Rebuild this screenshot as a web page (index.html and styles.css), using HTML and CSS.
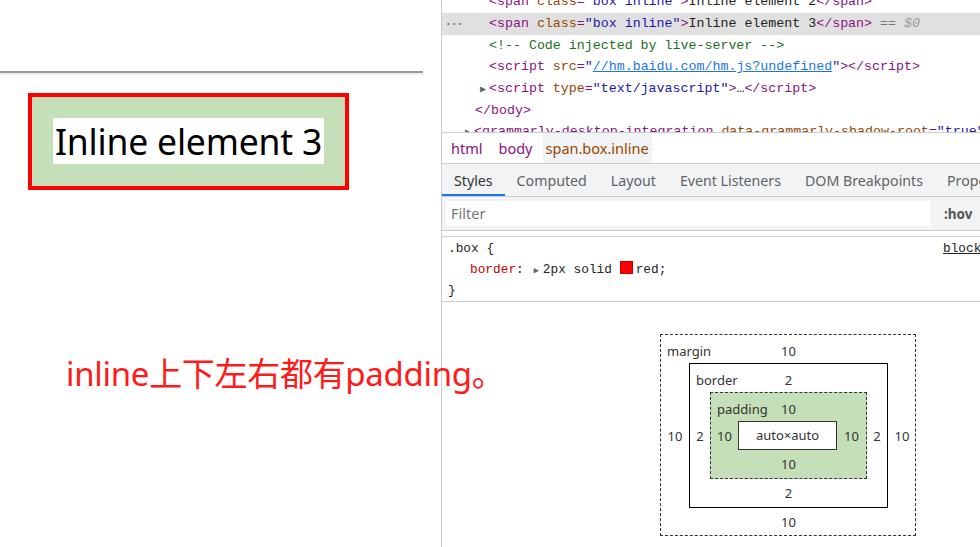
FILE: index.html
```html
<!DOCTYPE html>
<html>
<head>
<meta charset="utf-8">
<link rel="stylesheet" href="styles.css">
</head>
<body>
<div class="page">
  <hr class="rule">
  <div class="demo"><span class="inline-box">Inline element 3</span></div>
</div>
<div class="note">inline上下左右都有padding。</div>
<div class="devtools">
  <div class="tree">
    <div class="row d2"><span class="tg">&lt;span</span> <span class="an">class</span><span class="tg">=</span><span class="av">"box inline"</span><span class="tg">&gt;</span>Inline element 2<span class="tg">&lt;/span&gt;</span></div>
    <div class="row d2 sel"><span class="dots">•••</span><span class="tg">&lt;span</span> <span class="an">class</span><span class="tg">=</span><span class="av">"box inline"</span><span class="tg">&gt;</span>Inline element 3<span class="tg">&lt;/span&gt;</span><span class="eq"> == <i>$0</i></span></div>
    <div class="row d2"><span class="cm">&lt;!-- Code injected by live-server --&gt;</span></div>
    <div class="row d2"><span class="tg">&lt;script</span> <span class="an">src</span><span class="tg">=</span><span class="av">"<u class="lk">//hm.baidu.com/hm.js?undefined</u>"</span><span class="tg">&gt;&lt;/script&gt;</span></div>
    <div class="row d2"><span class="tri">▶</span><span class="tg">&lt;script</span> <span class="an">type</span><span class="tg">=</span><span class="av">"text/javascript"</span><span class="tg">&gt;</span>…<span class="tg">&lt;/script&gt;</span></div>
    <div class="row d1"><span class="tg">&lt;/body&gt;</span></div>
    <div class="row d0"><span class="tri">▶</span><span class="tg">&lt;grammarly-desktop-integration</span> <span class="an">data-grammarly-shadow-root</span><span class="tg">=</span><span class="av">"true"</span><span class="tg">&gt;</span></div>
  </div>
  <div class="crumbs">
    <span class="crumb">html</span>
    <span class="crumb">body</span>
    <span class="crumb cur">span.box.inline</span>
  </div>
  <div class="tabs">
    <span class="tab on">Styles</span>
    <span class="tab">Computed</span>
    <span class="tab">Layout</span>
    <span class="tab">Event Listeners</span>
    <span class="tab">DOM Breakpoints</span>
    <span class="tab">Properties</span>
  </div>
  <div class="filterbar">
    <div class="filter">Filter</div>
    <span class="hov">:hov</span>
  </div>
  <div class="rules">
    <div class="rulehead"><span>.box {</span><u class="src">blocks.html:9</u></div>
    <div class="decl"><span class="pn">border</span>: <span class="ptri">▶</span>2px solid <span class="sw"></span>red;</div>
    <div>}</div>
  </div>
  <div class="metrics">
    <div class="bm margin">
      <div class="top"><span class="lbl">margin</span><span>10</span><span></span></div>
      <div class="side">10</div>
      <div class="bm border">
        <div class="top"><span class="lbl">border</span><span>2</span><span></span></div>
        <div class="side">2</div>
        <div class="bm padding">
          <div class="top"><span class="lbl">padding</span><span>10</span><span></span></div>
          <div class="side">10</div>
          <div class="content">auto×auto</div>
          <div class="side">10</div>
          <div class="bottom">10</div>
        </div>
        <div class="side">2</div>
        <div class="bottom">2</div>
      </div>
      <div class="side">10</div>
      <div class="bottom">10</div>
    </div>
  </div>
</div>
</body>
</html>
```

FILE: styles.css
```css
html, body {
  margin: 0;
  height: 547px;
  overflow: hidden;
}
body {
  display: flex;
  background: #fff;
  font-family: "Noto Sans", "Open Sans", sans-serif;
  position: relative;
}
.page {
  width: 441px;
  flex-shrink: 0;
  padding-top: 71px;
  box-sizing: border-box;
}
.rule {
  margin: 0;
  width: 423px;
  height: 0;
  border: none;
  border-top: 2px solid #9a9a9a;
  border-bottom: 2px solid #ededed;
}
.demo {
  display: inline-block;
  margin: 18px 0 0 28px;
  border: 4px solid #ff0000;
  background: #c5dfb9;
  padding: 21px 21px 22px 21px;
}
.inline-box {
  display: block;
  background: #fff;
  color: #000;
  font-family: "Noto Sans", sans-serif;
  font-size: 35.5px;
  line-height: 46px;
  height: 46px;
  width: 271px;
  text-align: center;
  letter-spacing: -0.2px;
  white-space: nowrap;
}
.note {
  position: absolute;
  left: 66px;
  top: 351px;
  color: #ff1a1a;
  font-family: "Noto Sans", "Noto Sans CJK SC", sans-serif;
  font-size: 33px;
  line-height: 46px;
  z-index: 2;
  white-space: nowrap;
  letter-spacing: -0.3px;
}
.devtools {
  width: 692px;
  flex-shrink: 0;
  border-left: 1px solid #cbcdd1;
  color: #222;
  font-family: "Noto Sans", sans-serif;
}
.tree {
  height: 132px;
  overflow: hidden;
  font-family: "Liberation Mono", monospace;
  font-size: 13.3px;
  white-space: nowrap;
}
.row {
  height: 21.7px;
  line-height: 21.7px;
  color: #222;
}
.row:first-child { margin-top: -8.7px; }
.d2 { padding-left: 47px; }
.d1 { padding-left: 33px; }
.d0 { padding-left: 32px; }
.sel { background: #e0e0e0; position: relative; }
.dots {
  position: absolute;
  left: 4px;
  font-size: 8px;
  color: #777;
  letter-spacing: 1px;
}
.tri {
  display: inline-block;
  width: 8px;
  margin-left: -9px;
  margin-right: 1px;
  font-size: 10px;
  color: #666;
}
.tg { color: #881280; }
.an { color: #994500; }
.av { color: #1a1aa6; }
.cm { color: #236e25; }
.lk { color: #1a73e8; }
.eq { color: #777; }
.eq i { color: #999; }
.crumbs {
  height: 30px;
  border-top: 1px solid #cbcdd1;
  display: flex;
  align-items: stretch;
  padding-left: 6px;
  font-size: 14.5px;
}
.crumb {
  display: flex;
  align-items: center;
  padding: 0 3px;
  margin-right: 10px;
  color: #881280;
}
.crumb.cur {
  background: #f1f3f4;
  color: #994500;
  margin-left: -3px;
}
.tabs {
  height: 32px;
  background: #f1f3f4;
  border-top: 1px solid #cbcdd1;
  border-bottom: 1px solid #cbcdd1;
  display: flex;
  font-size: 14.2px;
  white-space: nowrap;
}
.tab {
  display: flex;
  align-items: center;
  padding: 0 12px;
  color: #5f6368;
  box-sizing: border-box;
  border-bottom: 2px solid transparent;
  padding-top: 2px;
}
.tab.on {
  color: #333;
  border-bottom-color: #1a73e8;
}
.filterbar {
  height: 33px;
  background: #f1f3f4;
  border-bottom: 1px solid #cbcdd1;
  display: flex;
  align-items: center;
  padding-left: 4px;
}
.filter {
  width: 484px;
  height: 25px;
  background: #fff;
  color: #777;
  font-size: 14.5px;
  line-height: 25px;
  padding-left: 5px;
  box-sizing: border-box;
}
.hov {
  margin-left: 14px;
  font-weight: bold;
  font-size: 13.5px;
  color: #555;
}
.rules {
  margin-top: 5px;
  border-top: 1px solid #cbcdd1;
  border-bottom: 1px solid #cbcdd1;
  padding: 2px 0 4px 6px;
  height: 58px;
  font-family: "Liberation Mono", monospace;
  font-size: 12.8px;
  line-height: 19.5px;
  color: #222;
}
.rulehead {
  display: grid;
  grid-template-columns: 495px auto;
}
.src { color: #222; }
.decl { padding-left: 22px; line-height: 21px; }
.decl + div { line-height: 17px; }
.pn { color: #c80000; }
.ptri {
  font-size: 9px;
  color: #666;
  margin-right: 4px;
  margin-left: 2px;
}
.sw {
  display: inline-block;
  width: 11px;
  height: 11px;
  background: #ff0000;
  border: 1px solid #c00;
  vertical-align: -1px;
  margin-right: 3px;
}
.metrics {
  padding-top: 32px;
  display: flex;
  justify-content: center;
  color: #333;
  font-size: 13px;
}
.bm {
  display: grid;
  grid-template-columns: 28px auto 28px;
  grid-template-rows: 28px auto 28px;
  align-items: center;
  text-align: center;
}
.bm .top {
  grid-column: 1 / 4;
  display: grid;
  grid-template-columns: 1fr auto 1fr;
  align-items: center;
  height: 28px;
  padding-top: 3px;
  box-sizing: border-box;
}
.bm .top .lbl {
  justify-self: start;
  padding-left: 6px;
}
.bm .bottom {
  grid-column: 1 / 4;
  height: 28px;
  line-height: 28px;
}
.margin {
  border: 1px dashed #333;
  width: 254px;
  height: 200px;
  box-sizing: content-box;
}
.border {
  border: 1px solid #000;
  grid-template-columns: 20px auto 20px;
}
.padding {
  border: 1px dashed #333;
  background: #c5dfb8;
  grid-template-columns: 27px auto 29px;
}
.content {
  border: 1px solid #333;
  background: #fff;
  width: 97px;
  height: 27px;
  line-height: 27px;
}
```
